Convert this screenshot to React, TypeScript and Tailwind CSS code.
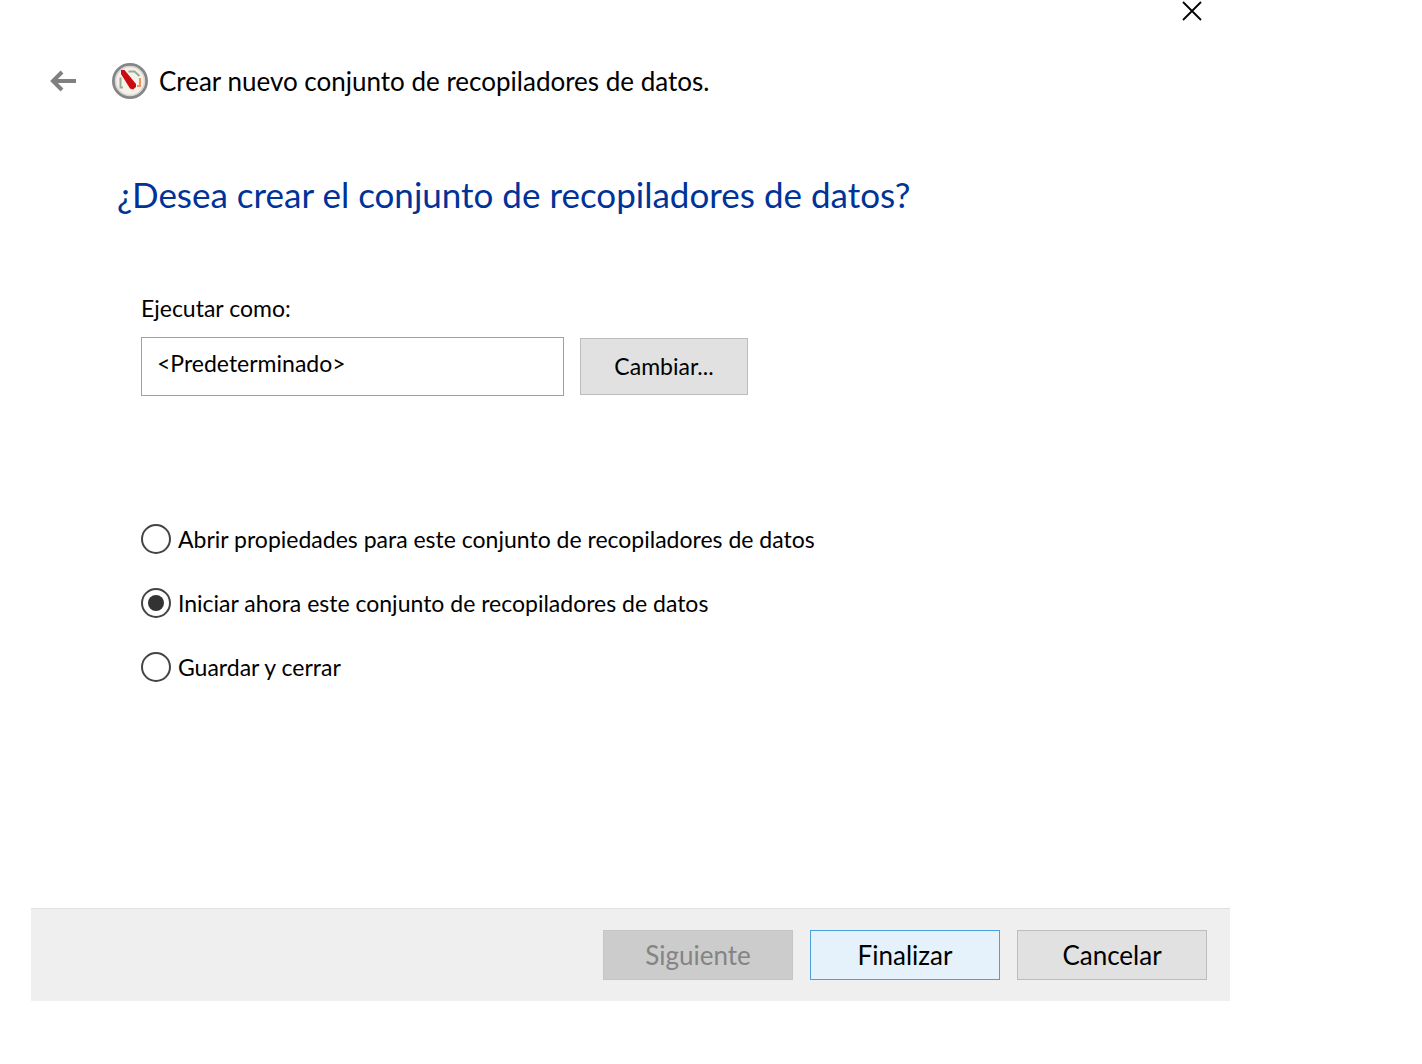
import { useState } from "react";

const options = [
  "Abrir propiedades para este conjunto de recopiladores de datos",
  "Iniciar ahora este conjunto de recopiladores de datos",
  "Guardar y cerrar",
];

function BackIcon() {
  return (
    <svg viewBox="0 0 28 24" className="h-6 w-7" fill="none" stroke="#808080" strokeWidth="4" aria-hidden="true">
      <path d="M27 12H4M13 3L4 12l9 9" />
    </svg>
  );
}

function GaugeIcon() {
  return (
    <svg viewBox="0 0 38 38" className="size-[38px] shrink-0" aria-hidden="true">
      <circle cx="19" cy="19" r="16.5" fill="#f5f0e8" stroke="#85868a" strokeWidth="3" />
      <circle cx="19" cy="19" r="14.500" fill="none" stroke="#d6d5d2" strokeWidth="1.500" />
      <path d="M12 25.500H9.500V15.500M17.500 9.500h6l5 4.500" fill="none" stroke="#9ba897" strokeWidth="2" />
      <path d="M29 16v8h-3" fill="none" stroke="#f0935a" strokeWidth="2" />
      <path d="M10 8h3.500L25 22v3l-3 2.500-3-1L10 12z" fill="#cb0a10" />
    </svg>
  );
}

export default function App() {
  const [selected, setSelected] = useState(1);
  return (
    <main className="min-h-screen bg-white pr-48 pl-[31px] font-['Lato','Open_Sans',sans-serif] text-black">
      <header>
        <div className="flex h-[22px] justify-end pr-7">
          <button type="button" aria-label="Cerrar">
            <svg viewBox="0 0 20 20" className="size-5" fill="none" stroke="#000" strokeWidth="1.800" aria-hidden="true">
              <path d="M1 1l18 18M19 1L1 19" />
            </svg>
          </button>
        </div>
        <div className="flex items-center pt-10 pl-[18px]">
          <button type="button" aria-label="Atrás" className="mr-[34px]">
            <BackIcon />
          </button>
          <GaugeIcon />
          <p className="ml-[10px] text-[26px] leading-[38px]">Crear nuevo conjunto de recopiladores de datos.</p>
        </div>
      </header>

      <form onSubmit={(e) => e.preventDefault()}>
        <section className="h-[808px] pt-[70px] pl-[110px]">
          <h1 className="-ml-6 text-[35px] leading-[48px] text-[#003399]">
            ¿Desea crear el conjunto de recopiladores de datos?
          </h1>
          <label htmlFor="run-as" className="mt-[74px] block w-fit text-[23px] leading-[32px]">
            Ejecutar como:
          </label>
          <div className="mt-[13px] flex items-center gap-4">
            <input
              id="run-as"
              readOnly
              defaultValue="<Predeterminado>"
              className="h-[59px] w-[423px] border border-[#a0a0a0] bg-white pb-2 pl-[15px] text-[23px] outline-none"
            />
            <button type="button" className="h-[57px] w-[168px] border border-[#bdbdbd] bg-[#e1e1e1] text-[23px]">
              Cambiar...
            </button>
          </div>
          <fieldset aria-label="Al finalizar" className="mt-[127px] flex flex-col gap-8">
            {options.map((text, i) => (
              <label key={text} className="flex w-fit items-center gap-[7px] text-[23px] leading-[32px]">
                <input
                  type="radio"
                  name="finish"
                  checked={selected === i}
                  onChange={() => setSelected(i)}
                  className="grid size-[30px] shrink-0 appearance-none place-content-center rounded-full border-2 border-[#444] bg-white before:size-4 before:rounded-full checked:before:bg-[#333]"
                />
                {text}
              </label>
            ))}
          </fieldset>
        </section>
        <footer className="flex h-[93px] items-center justify-end gap-[17px] border-t border-[#dfdfdf] bg-[#efefef] pr-[23px] text-[26px]">
          <button type="button" disabled className="h-[50px] w-[190px] border border-[#c5c5c5] bg-[#cccccc] text-[#848484]">
            Siguiente
          </button>
          <button type="submit" className="h-[50px] w-[190px] border border-[#4a9fe0] bg-[#e5f1fb]">
            Finalizar
          </button>
          <button type="button" className="h-[50px] w-[190px] border border-[#bdbdbd] bg-[#e1e1e1]">
            Cancelar
          </button>
        </footer>
      </form>
    </main>
  );
}
